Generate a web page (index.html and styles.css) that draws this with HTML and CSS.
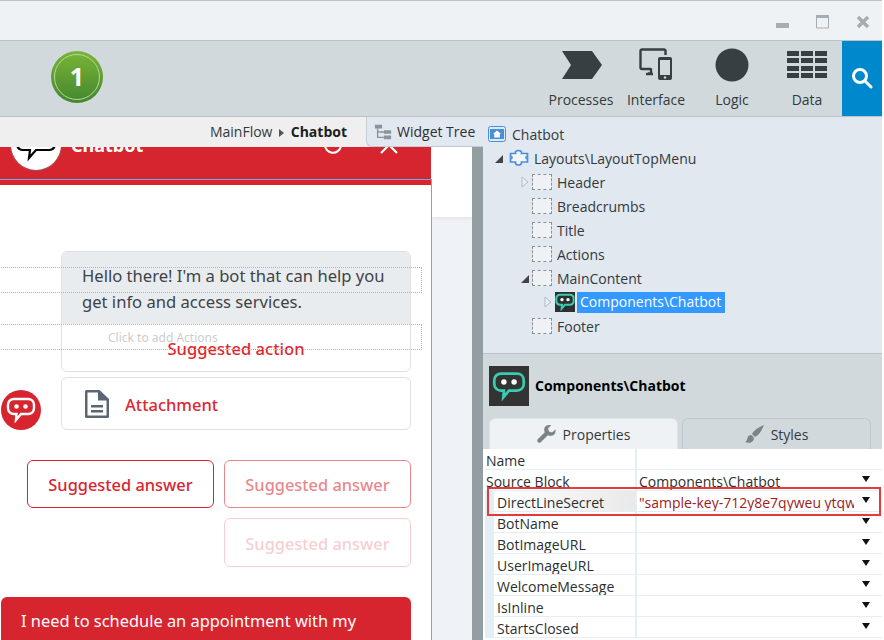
FILE: index.html
```html
<!DOCTYPE html>
<html lang="en">
<head>
    <meta charset="UTF-8">
    <title>Chatbot - Widget Tree</title>
    <link rel="stylesheet" href="styles.css">
</head>
<body>
<div class="window">
    <div class="titlebar">
        <svg class="win-btn" width="14" height="14" viewBox="0 0 14 14"><rect x="0" y="8" width="13" height="5" fill="#a5adb2"/></svg>
        <svg class="win-btn" width="14" height="14" viewBox="0 0 14 14"><path d="M.5 1h12v12H.5z" fill="#eef2f5" stroke="#a5adb2"/><rect y="0" width="13" height="3" fill="#a5adb2"/></svg>
        <svg class="win-btn" width="14" height="14" viewBox="0 0 14 14"><path d="M2 2l10 10M12 2L2 12" stroke="#a5adb2" stroke-width="3.4"/></svg>
    </div>

    <div class="toolbar">
        <div class="badge"><span>1</span></div>
        <div class="tool-items">
            <div class="tool tool-processes">
                <svg width="42" height="32" viewBox="0 0 42 32"><path d="M1 2h30l10 14-10 14H1l9-14z" fill="#383f42"/></svg>
                <span>Processes</span>
            </div>
            <div class="tool tool-interface">
                <svg width="34" height="34" viewBox="0 0 34 34"><path d="M12 21H3a1.500 1.500 0 0 1-1.500-1.500V3A1.500 1.500 0 0 1 3 1.500h22A1.500 1.500 0 0 1 26.500 3v4" fill="none" stroke="#383f42" stroke-width="2.400"/><path d="M9 25.500h3v-4h-1M7 26h7" fill="none" stroke="#383f42" stroke-width="2.400"/><rect x="19" y="9" width="14" height="23" rx="2" fill="#383f42"/><rect x="21" y="12" width="10" height="15" fill="#d2d9dc"/><circle cx="26" cy="29.500" r="1.200" fill="#d2d9dc"/></svg>
                <span>Interface</span>
            </div>
            <div class="tool tool-logic">
                <svg width="34" height="34" viewBox="0 0 34 34"><circle cx="17" cy="17" r="16.500" fill="#383f42"/></svg>
                <span>Logic</span>
            </div>
            <div class="tool tool-data">
                <svg width="40" height="30" viewBox="0 0 40 30"><path d="M0 1h12v5H0zM14 1h12v5H14zM28 1h12v5H28zM0 8h12v5H0zM14 8h12v5H14zM28 8h12v5H28zM0 16h12v5H0zM14 16h12v5H14zM28 16h12v5H28zM0 23h12v5H0zM14 23h12v5H14zM28 23h12v5H28z" fill="#383f42"/></svg>
                <span>Data</span>
            </div>
        </div>
        <div class="search">
            <svg width="22" height="22" viewBox="0 0 22 22"><circle cx="9" cy="9" r="6.500" fill="none" stroke="#fff" stroke-width="3"/><path d="M14 14l6 6" stroke="#fff" stroke-width="3" stroke-linecap="round"/></svg>
        </div>
    </div>

    <div class="main">
        <div class="left">
            <div class="tabbar">
                <div class="breadcrumb">MainFlow <i class="crumb-arrow"></i> <b>Chatbot</b></div>
                <div class="tree-tab">
                    <svg width="18" height="18" viewBox="0 0 20 18"><path d="M1 1h8v4H1zM11 7h8v4h-8zM11 13h8v4h-8z" fill="#8a9499"/><path d="M4 5v10h7M4 9h7" fill="none" stroke="#8a9499" stroke-width="1.500"/></svg>
                    Widget Tree
                </div>
            </div>
            <div class="canvas">
                <div class="chat">
                    <div class="chat-header">
                        <div class="chat-header-inner">
                            <div class="bot-logo">
                                <svg width="42" height="36" viewBox="0 0 42 36"><path d="M8 2h26c4 0 6 3 6 7v7c0 4-2 7-6 7H21l-7 8 1-8H8c-4 0-6-3-6-7V9c0-4 2-7 6-7z" fill="#fff" stroke="#000" stroke-width="2.200"/></svg>
                            </div>
                            <span class="chat-title">Chatbot</span>
                            <svg class="head-refresh" width="20" height="20" viewBox="0 0 20 20"><path d="M15 3.500A8 8 0 1 0 18 10" fill="none" stroke="#fff" stroke-width="2"/></svg>
                            <svg class="head-close" width="20" height="20" viewBox="0 0 20 20"><path d="M2 2l16 16M18 2L2 18" stroke="#fff" stroke-width="2.200"/></svg>
                        </div>
                    </div>
                    <div class="chat-body">
                        <div class="msg">
                            <div class="bubble">
                                <p class="bubble-text">Hello there! I'm a bot that can help you get info and access services.</p>
                                <div class="bubble-action">Suggested action</div>
                            </div>
                        </div>
                        <div class="msg msg-attach">
                            <div class="avatar">
                                <svg width="30" height="26" viewBox="0 0 30 26"><path d="M8 2h14c3.500 0 6 2.500 6 6v3c0 3.500-2.500 6-6 6H15l-5 6 .5-6H8c-3.500 0-6-2.500-6-6V8c0-3.500 2.500-6 6-6z" fill="none" stroke="#fff" stroke-width="2.400"/><circle cx="10.500" cy="9.500" r="2.300" fill="#fff"/><circle cx="19.500" cy="9.500" r="2.300" fill="#fff"/></svg>
                            </div>
                            <div class="attachment">
                                <svg width="26" height="30" viewBox="0 0 26 30"><path d="M2.500 1h13L25 10v17.500a1.500 1.500 0 0 1-1.500 1.500h-21A1.500 1.500 0 0 1 1 27.500v-25A1.500 1.500 0 0 1 2.500 1z" fill="#5b6670"/><path d="M3.500 3.500h10.500v8h8.500v15H3.500z" fill="#fff"/><path d="M7 16h12v2.500H7zM7 21h12v2.500H7z" fill="#5b6670"/></svg>
                                <span>Attachment</span>
                            </div>
                        </div>
                        <div class="answers">
                            <div class="answer">Suggested answer</div>
                            <div class="answer answer-mid">Suggested answer</div>
                            <div class="answer answer-low">Suggested answer</div>
                        </div>
                        <div class="user-msg">I need to schedule an appointment with my banker</div>
                    </div>
                    <div class="drop-zone drop-one"></div>
                    <div class="drop-zone drop-two"><span>Click to add Actions</span></div>
                    <div class="block-outline"></div>
                </div>
                <div class="canvas-side"><div class="side-top"></div></div>
                <div class="splitter"></div>
            </div>
        </div>

        <div class="right">
            <div class="tree">
                <div class="row row-root">
                    <svg class="root-icon" width="18" height="16" viewBox="0 0 18 16"><rect x=".5" y=".5" width="17" height="15" rx="2" fill="#dbe9f9" stroke="#4a90d9"/><rect x="2" y="3" width="14" height="10" fill="#4a90d9"/><path d="M9 4.500L5 8h1.200v3.500h5.600V8H13z" fill="#fff"/></svg>
                    Chatbot
                </div>
                <div class="row lvl-1">
                    <i class="arrow-open"></i>
                    <svg class="puzzle" width="20" height="18" viewBox="0 0 20 18"><path d="M1.500 4.500h5c-1-4 7-4 6 0h6v3c-2-1-2 3 0 2v3.500h-6c1 4-7 4-6 0h-5v-3.500c2 1 2-3 0-2z" fill="#f2f6fb" stroke="#4a90d9" stroke-width="1.700"/></svg>
                    Layouts\LayoutTopMenu
                </div>
                <div class="row lvl-2">
                    <svg class="arrow-closed" width="8" height="12" viewBox="0 0 8 12"><path d="M1 1l6 5-6 5z" fill="#e9eef3" stroke="#b4bcc1"/></svg>
                    <span class="ph"></span>Header
                </div>
                <div class="row lvl-2"><i class="arrow-none"></i><span class="ph"></span>Breadcrumbs</div>
                <div class="row lvl-2"><i class="arrow-none"></i><span class="ph"></span>Title</div>
                <div class="row lvl-2"><i class="arrow-none"></i><span class="ph"></span>Actions</div>
                <div class="row lvl-2"><i class="arrow-open"></i><span class="ph"></span>MainContent</div>
                <div class="row lvl-3">
                    <svg class="arrow-closed" width="8" height="12" viewBox="0 0 8 12"><path d="M1 1l6 5-6 5z" fill="#e9eef3" stroke="#b4bcc1"/></svg>
                    <span class="block-icon">
                        <svg width="20" height="18" viewBox="0 0 30 26"><path d="M8 2h14c3.500 0 6 2.500 6 6v3c0 3.500-2.500 6-6 6H15l-5 6 .5-6H8c-3.500 0-6-2.500-6-6V8c0-3.500 2.500-6 6-6z" fill="none" stroke="#3bcbb0" stroke-width="3"/><circle cx="10.500" cy="9.500" r="2.500" fill="#fff"/><circle cx="19.500" cy="9.500" r="2.500" fill="#fff"/></svg>
                    </span>
                    <span class="selected-name">Components\Chatbot</span>
                </div>
                <div class="row lvl-2"><i class="arrow-none"></i><span class="ph"></span>Footer</div>
            </div>

            <div class="props">
                <div class="props-head">
                    <div class="props-icon">
                        <svg width="34" height="30" viewBox="0 0 30 26"><path d="M8 2h14c3.500 0 6 2.500 6 6v3c0 3.500-2.500 6-6 6H15l-5 6 .5-6H8c-3.500 0-6-2.500-6-6V8c0-3.500 2.500-6 6-6z" fill="none" stroke="#3bcbb0" stroke-width="2.400"/><circle cx="10.500" cy="9.500" r="2.400" fill="#fff"/><circle cx="19.500" cy="9.500" r="2.400" fill="#fff"/></svg>
                    </div>
                    <b>Components\Chatbot</b>
                </div>
                <div class="props-tabs">
                    <div class="props-tab tab-on">
                        <svg width="20" height="20" viewBox="0 0 20 20"><path d="M18.500 5.500l-3.500 3-3-1-1-3 3.200-3.300C11 .5 8 1.500 7.300 4.500 7 6 7.300 7.300 7.800 8.200L1 15c-1 1.200-1 2.200 0 3.200s2.200.8 3-.2l6.800-6.800c3 1.200 5.500.5 7-1.500.7-1.200 1-2.700.7-4.200z" fill="#7b8387"/></svg>
                        Properties
                    </div>
                    <div class="props-tab">
                        <svg width="20" height="20" viewBox="0 0 20 20"><path d="M19 1C14 3 9 6 7 10l3 3c4-2 7-7 9-12zM6 11c-2 0-3 1-3.500 3S1.500 17.500 0 18c3 1.500 7 1 8.500-2 .7-1.500.3-2.500-.5-3.500z" fill="#7b8387"/></svg>
                        Styles
                    </div>
                </div>
                <div class="prop-table">
                    <div class="prop"><div class="prop-name">Name</div><div class="prop-value"></div></div>
                    <div class="prop"><div class="prop-name">Source Block</div><div class="prop-value">Components\Chatbot<i class="drop"></i></div></div>
                    <div class="prop sub secret"><div class="prop-name">DirectLineSecret</div><div class="prop-value"><span class="secret-val">"sample-key-712y8e7qyweu ytqwe</span><i class="drop"></i></div></div>
                    <div class="prop sub"><div class="prop-name">BotName</div><div class="prop-value"><i class="drop"></i></div></div>
                    <div class="prop sub"><div class="prop-name">BotImageURL</div><div class="prop-value"><i class="drop"></i></div></div>
                    <div class="prop sub"><div class="prop-name">UserImageURL</div><div class="prop-value"><i class="drop"></i></div></div>
                    <div class="prop sub"><div class="prop-name">WelcomeMessage</div><div class="prop-value"><i class="drop"></i></div></div>
                    <div class="prop sub"><div class="prop-name">IsInline</div><div class="prop-value"><i class="drop"></i></div></div>
                    <div class="prop sub"><div class="prop-name">StartsClosed</div><div class="prop-value"><i class="drop"></i></div></div>
                    <div class="red-mark"></div>
                </div>
            </div>
        </div>
    </div>
</div>
</body>
</html>
```

FILE: styles.css
```css
* {
    box-sizing: border-box;
}
body {
    margin: 0;
    background: #fff;
    font-family: "Open Sans", "Noto Sans", sans-serif;
    font-size: 14px;
    color: #2c2f31;
    overflow: hidden;
}
.window {
    width: 882px;
    height: 640px;
    display: flex;
    flex-direction: column;
    overflow: hidden;
}

/* title bar */
.titlebar {
    height: 41px;
    flex: none;
    display: flex;
    justify-content: flex-end;
    gap: 26px;
    padding: 14px 12px 0 0;
    background: #eef2f5;
    border-top: 1px solid #b9c4c8;
    border-bottom: 1px solid #b9c4c8;
}

/* toolbar */
.toolbar {
    height: 76px;
    flex: none;
    display: flex;
    background: #d2d9dc;
    border-bottom: 1px solid #b9c4c8;
}
.badge {
    width: 52px;
    height: 52px;
    margin: 10px 0 0 51px;
    border-radius: 50%;
    background: linear-gradient(#7ab536, #44862f);
    padding: 3px;
}
.badge span {
    display: block;
    height: 46px;
    border: 1px solid #b5d8a0;
    border-radius: 50%;
    color: #fff;
    font-size: 25px;
    font-weight: 700;
    line-height: 43px;
    text-align: center;
}
.tool-items {
    flex: 1;
    position: relative;
}
.tool {
    position: absolute;
    top: 0;
    width: 90px;
    height: 75px;
    text-align: center;
    font-size: 14px;
}
.tool svg {
    position: absolute;
    left: 50%;
    transform: translateX(-50%);
}
.tool span {
    position: absolute;
    left: 0;
    right: 0;
    top: 49px;
    color: #33393c;
}
.tool-processes { left: 433px; }
.tool-processes svg { top: 8px; margin-left: 1px; }
.tool-interface { left: 508px; }
.tool-interface svg { top: 7px; }
.tool-logic { left: 584px; }
.tool-logic svg { top: 7px; }
.tool-data { left: 659px; }
.tool-data svg { top: 9px; }
.search {
    width: 40px;
    background: #0088cc;
    padding: 26px 0 0 9px;
}

/* main area */
.main {
    flex: 1;
    display: flex;
    min-height: 0;
}
.left {
    width: 483px;
    flex: none;
    display: flex;
    flex-direction: column;
}
.tabbar {
    height: 30px;
    flex: none;
    display: flex;
    background: #efefef;
}
.breadcrumb {
    flex: 1;
    text-align: right;
    padding: 5px 19px 0 0;
    color: #33393c;
    white-space: nowrap;
}
.breadcrumb b {
    color: #1d1f20;
}
.crumb-arrow {
    display: inline-block;
    border-left: 5px solid #555;
    border-top: 4.500px solid transparent;
    border-bottom: 4.500px solid transparent;
    margin: 0 3px;
}
.tree-tab {
    width: 117px;
    flex: none;
    display: flex;
    align-items: center;
    gap: 5px;
    padding-left: 7px;
    background: #e2e8f0;
    border-left: 1px solid #c4ccd2;
    border-bottom: 1px solid #c4ccd2;
    border-bottom-left-radius: 6px;
    white-space: nowrap;
}
.canvas {
    flex: 1;
    display: flex;
    min-height: 0;
    background: #eff3f7;
}
.canvas-side {
    width: 40px;
    flex: none;
}
.side-top {
    height: 70px;
    background: #fff;
    box-shadow: 0 1px 4px rgba(0, 0, 0, 0.08);
}
.splitter {
    width: 11px;
    flex: none;
    background: #939ea2;
}

/* chatbot preview */
.chat {
    width: 432px;
    flex: none;
    position: relative;
    background: #fff;
    font-family: "Noto Sans", "Open Sans", sans-serif;
    overflow: hidden;
}
.chat-header {
    width: 431px;
    height: 38px;
    background: #d7252f;
    overflow: hidden;
}
.chat-header-inner {
    height: 50px;
    margin-top: -27px;
    display: flex;
    align-items: center;
    padding-left: 11px;
    color: #fff;
}
.bot-logo {
    width: 50px;
    height: 50px;
    flex: none;
    background: #fff;
    border-radius: 50%;
    outline: 1px dotted #777;
    display: flex;
    align-items: center;
    justify-content: center;
}
.chat-title {
    margin-left: 10px;
    font-size: 18px;
    font-weight: 700;
    width: 252px;
}
.head-close {
    margin-left: 36px;
}
.chat-body {
    padding: 66px 21px 0 1px;
}
.msg {
    margin-left: 60px;
}
.bubble {
    width: 350px;
    height: 121px;
    border: 1px solid #dfe1e4;
    border-radius: 6px;
    overflow: hidden;
}
.bubble-text {
    margin: 0;
    height: 72px;
    padding: 11px 20px 0;
    background: #e9ecef;
    color: #3d4348;
    font-size: 16.600px;
    line-height: 26px;
}
.bubble-action {
    padding-top: 13px;
    text-align: center;
    color: #dc2833;
    font-size: 16.600px;
    font-weight: 500;
}
.msg-attach {
    margin: 5px 0 0 0;
    display: flex;
    align-items: flex-end;
    gap: 20px;
}
.avatar {
    width: 40px;
    height: 40px;
    flex: none;
    border-radius: 50%;
    background: #d7252f;
    display: flex;
    align-items: center;
    justify-content: center;
}
.attachment {
    width: 350px;
    height: 53px;
    display: flex;
    align-items: center;
    gap: 15px;
    padding-left: 22px;
    border: 1px solid #dfe1e4;
    border-radius: 6px;
    color: #dc2833;
    font-size: 16.500px;
    font-weight: 500;
}
.attachment span {
    padding-top: 2px;
}
.answers {
    margin: 30px 0 0 26px;
    display: flex;
    flex-wrap: wrap;
    justify-content: flex-end;
    gap: 10px;
}
.answer {
    width: 187px;
    height: 48px;
    text-align: center;
    line-height: 48px;
    border: 1px solid #d7252f;
    border-radius: 6px;
    color: #d7252f;
    font-size: 16.400px;
    font-weight: 500;
}
.answer-mid {
    opacity: 0.55;
}
.answer-low {
    opacity: 0.22;
    height: 49px;
    line-height: 50px;
}
.user-msg {
    margin-top: 30px;
    width: 410px;
    padding: 11px 20px;
    background: #d7252f;
    border-radius: 6px;
    color: #fff;
    font-size: 16.400px;
    line-height: 26px;
}
.drop-zone {
    position: absolute;
    left: -2px;
    width: 424px;
    height: 26px;
    border: 1px dotted #b5b5b5;
}
.drop-one {
    top: 120px;
}
.drop-two {
    top: 177px;
}
.drop-two span {
    position: absolute;
    left: 109px;
    top: 4px;
    font-size: 12px;
    color: #cdcdcd;
}
.block-outline {
    position: absolute;
    left: -2px;
    top: 32px;
    width: 434px;
    height: 500px;
    border: 1px solid #6aa9ee;
}

/* widget tree */
.right {
    flex: 1;
    display: flex;
    flex-direction: column;
    min-width: 0;
    background: #e2e8f0;
}
.tree {
    height: 237px;
    flex: none;
    padding-top: 5px;
    border-bottom: 1px solid #b9c4c8;
}
.row {
    height: 24px;
    display: flex;
    align-items: center;
    white-space: nowrap;
    color: #33393c;
}
.row-root { padding-left: 5px; }
.root-icon { margin-right: 6px; }
.lvl-1 { padding-left: 12px; }
.lvl-2 { padding-left: 38px; }
.lvl-3 { padding-left: 61px; }
.puzzle { margin-right: 5px; }
.arrow-open,
.arrow-none {
    display: block;
    width: 11px;
    height: 10px;
    flex: none;
}
.arrow-open {
    margin-right: 3px;
    width: 8px;
    border-left: 8px solid transparent;
    border-bottom: 8px solid #444;
}
.lvl-1 .arrow-open { margin-right: 6px; }
.arrow-closed {
    flex: none;
    margin-right: 3px;
}
.ph {
    width: 20px;
    height: 16px;
    flex: none;
    margin-right: 5px;
    background: #eef2f5;
    border: 1px dashed #8a8f92;
}
.block-icon {
    width: 20px;
    height: 20px;
    flex: none;
    background: #2d2f31;
    display: flex;
    align-items: center;
    justify-content: center;
    margin-right: 2px;
}
.selected-name {
    background: #3399ff;
    color: #fff;
    padding: 0 4px 0 3px;
    height: 21px;
    line-height: 20px;
}

/* properties */
.props {
    flex: 1;
    display: flex;
    flex-direction: column;
    background: #d2d9dc;
    min-height: 0;
}
.props-head {
    height: 64px;
    flex: none;
    display: flex;
    align-items: center;
    gap: 6px;
    padding: 0 0 0 6px;
    color: #000;
}
.props-head b {
    padding-bottom: 2px;
}
.props-icon {
    width: 40px;
    height: 40px;
    background: #333;
    display: flex;
    align-items: center;
    justify-content: center;
}
.props-tabs {
    height: 31px;
    flex: none;
    display: flex;
    gap: 4px;
    padding-left: 6px;
}
.props-tab {
    width: 189px;
    display: flex;
    align-items: center;
    justify-content: center;
    gap: 6px;
    background: #d2d9dc;
    border: 1px solid #bfc8cc;
    border-bottom: 0;
    border-radius: 6px 6px 0 0;
    color: #33393c;
}
.tab-on {
    background: #eef2f5;
    border-color: #dde3e6;
}
.prop-table {
    flex: 1;
    position: relative;
    background: #fff;
    padding: 0 0 0 2px;
}
.prop {
    height: 21px;
    display: flex;
    border-bottom: 1px solid #e3eef6;
    overflow: hidden;
    line-height: 24px;
    color: #2c2f31;
}
.prop-name {
    width: 150px;
    flex: none;
    padding-left: 1px;
    white-space: nowrap;
}
.prop.sub .prop-name {
    padding-left: 3px;
    margin-left: 9px;
    width: 141px;
}
.prop.sub {
    background: linear-gradient(to right, #e3eef6 9px, #fff 9px);
}
.prop-value {
    flex: 1;
    position: relative;
    padding-left: 2px;
    border-left: 2px solid #e3eef6;
    white-space: nowrap;
    overflow: hidden;
}
.secret .prop-name {
    background: linear-gradient(to right, #fff, #e9e9e9);
}
.secret-val {
    display: block;
    width: 215px;
    overflow: hidden;
    color: #9c1c1c;
}
.drop {
    position: absolute;
    right: 12px;
    top: 6px;
    border-left: 4.500px solid transparent;
    border-right: 4.500px solid transparent;
    border-top: 6px solid #111;
}
.red-mark {
    position: absolute;
    left: 4px;
    top: 38px;
    width: 394px;
    height: 29px;
    border: 2px solid #e5393c;
}
```
